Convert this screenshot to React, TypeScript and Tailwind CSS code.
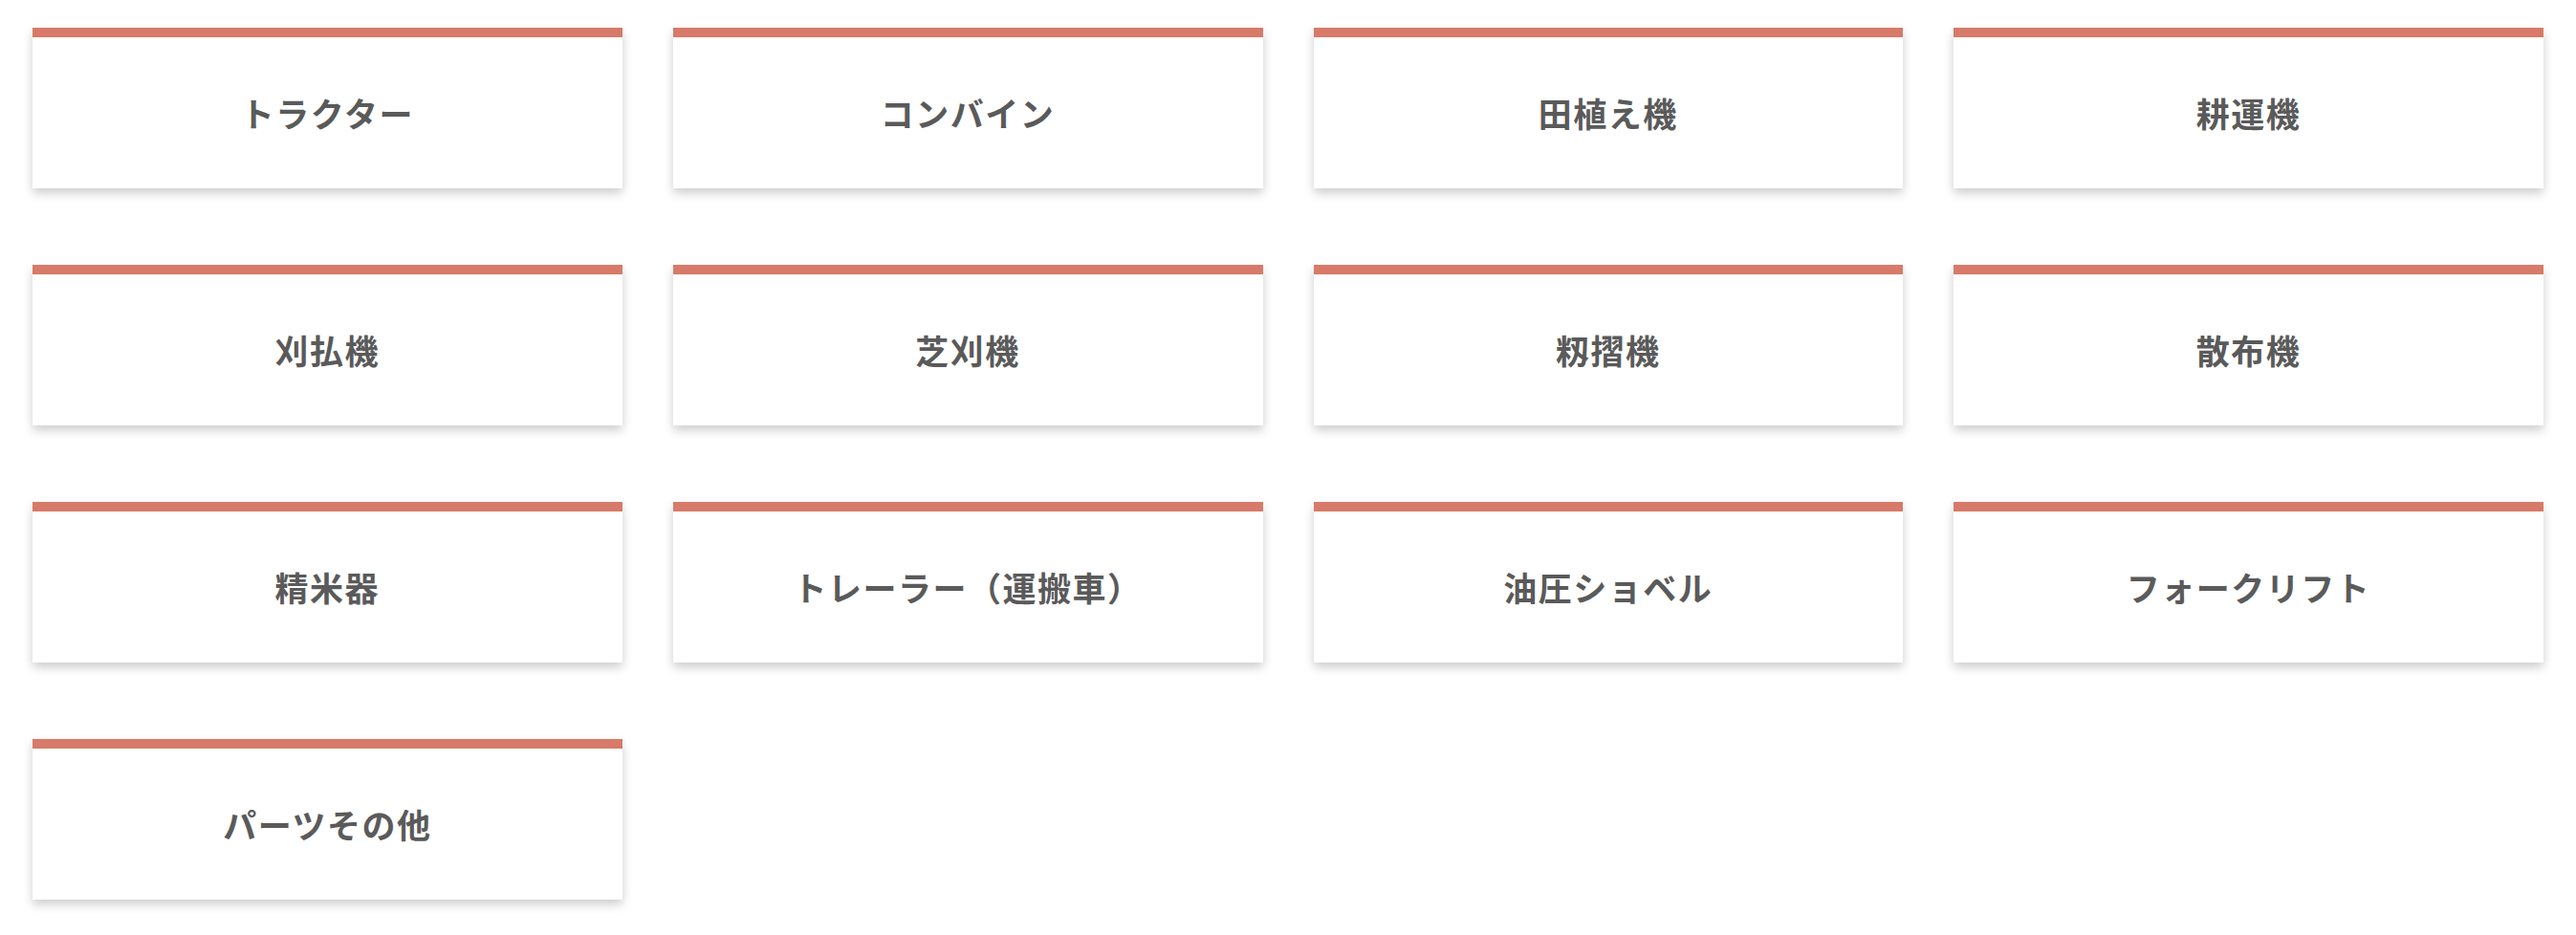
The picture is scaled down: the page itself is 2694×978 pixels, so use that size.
const categories = [
    'トラクター',
    'コンバイン',
    '田植え機',
    '耕運機',
    '刈払機',
    '芝刈機',
    '籾摺機',
    '散布機',
    '精米器',
    'トレーラー（運搬車）',
    '油圧ショベル',
    'フォークリフト',
    'パーツその他',
];

export default function App() {
    return (
        <div className="min-h-[978px] w-full bg-white px-[34px] pt-[29px] pb-[37px] font-['Noto_Sans_CJK_JP','Noto_Sans',sans-serif]">
            <div className="grid grid-cols-4 gap-x-[53px] gap-y-[80px]">
                {categories.map((name) => (
                    <a
                        key={name}
                        href="#"
                        className="flex h-[168px] flex-col border-t-[10px] border-[#d77a69] bg-white shadow-[0_5px_10px_rgba(0,0,0,0.2)]"
                    >
                        <span className="flex flex-1 items-center justify-center text-[35px] font-bold tracking-[1.5px] text-[#5a5a5a]">
                            {name}
                        </span>
                    </a>
                ))}
            </div>
        </div>
    );
}
